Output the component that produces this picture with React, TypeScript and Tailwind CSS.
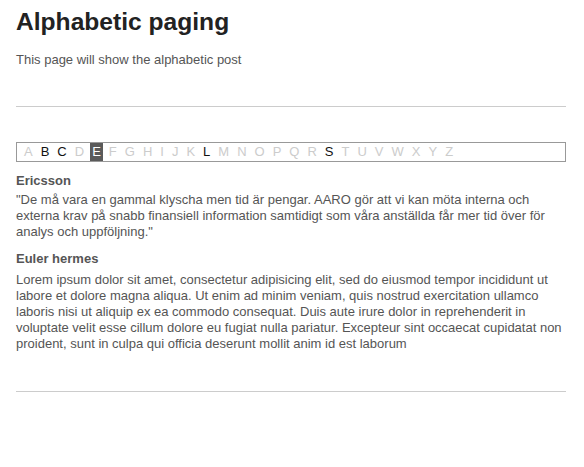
import React from "react";

const letters = "ABCDEFGHIJKLMNOPQRSTUVWXYZ".split("");
const active = new Set(["B", "C", "L", "S"]);
const current = "E";

export default function App() {
  return (
    <div className="bg-white min-h-[467px] pl-4 pr-[18px] pt-[8px] text-[#555] [font-family:'Liberation_Sans',Arial,sans-serif]">
      <h1 className="text-[24.6px] leading-[28px] font-bold text-[#222]">Alphabetic paging</h1>
      <p className="mt-4 text-[13px] leading-4">This page will show the alphabetic post</p>
      <hr className="mt-[38px] border-0 border-t border-[#ccc]" />
      <div className="mt-[35px] border border-[#999] flex gap-[4px] pl-[5px] text-[13px] leading-[18px]">
        {letters.map((l) => (
          <span
            key={l}
            className={
              l === current
                ? "px-[2px] bg-[#5a5a5a] text-white"
                : active.has(l)
                ? "px-[2px] text-[#111]"
                : "px-[2px] text-[#ccc]"
            }
          >
            {l}
          </span>
        ))}
      </div>
      <h3 className="mt-[11px] text-[13px] leading-4 font-bold">Ericsson</h3>
      <p className="mt-[3px] text-[13px] leading-4">
        "De må vara en gammal klyscha men tid är pengar. AARO gör att vi kan möta interna och externa krav på snabb finansiell information samtidigt som våra anställda får mer tid över för analys och uppföljning."
      </p>
      <h3 className="mt-[11px] text-[13px] leading-4 font-bold">Euler hermes</h3>
      <p className="mt-[5px] text-[13px] leading-4">
        Lorem ipsum dolor sit amet, consectetur adipisicing elit, sed do eiusmod tempor incididunt ut labore et dolore magna aliqua. Ut enim ad minim veniam, quis nostrud exercitation ullamco laboris nisi ut aliquip ex ea commodo consequat. Duis aute irure dolor in reprehenderit in voluptate velit esse cillum dolore eu fugiat nulla pariatur. Excepteur sint occaecat cupidatat non proident, sunt in culpa qui officia deserunt mollit anim id est laborum
      </p>
      <hr className="mt-[39px] border-0 border-t border-[#ccc]" />
    </div>
  );
}
